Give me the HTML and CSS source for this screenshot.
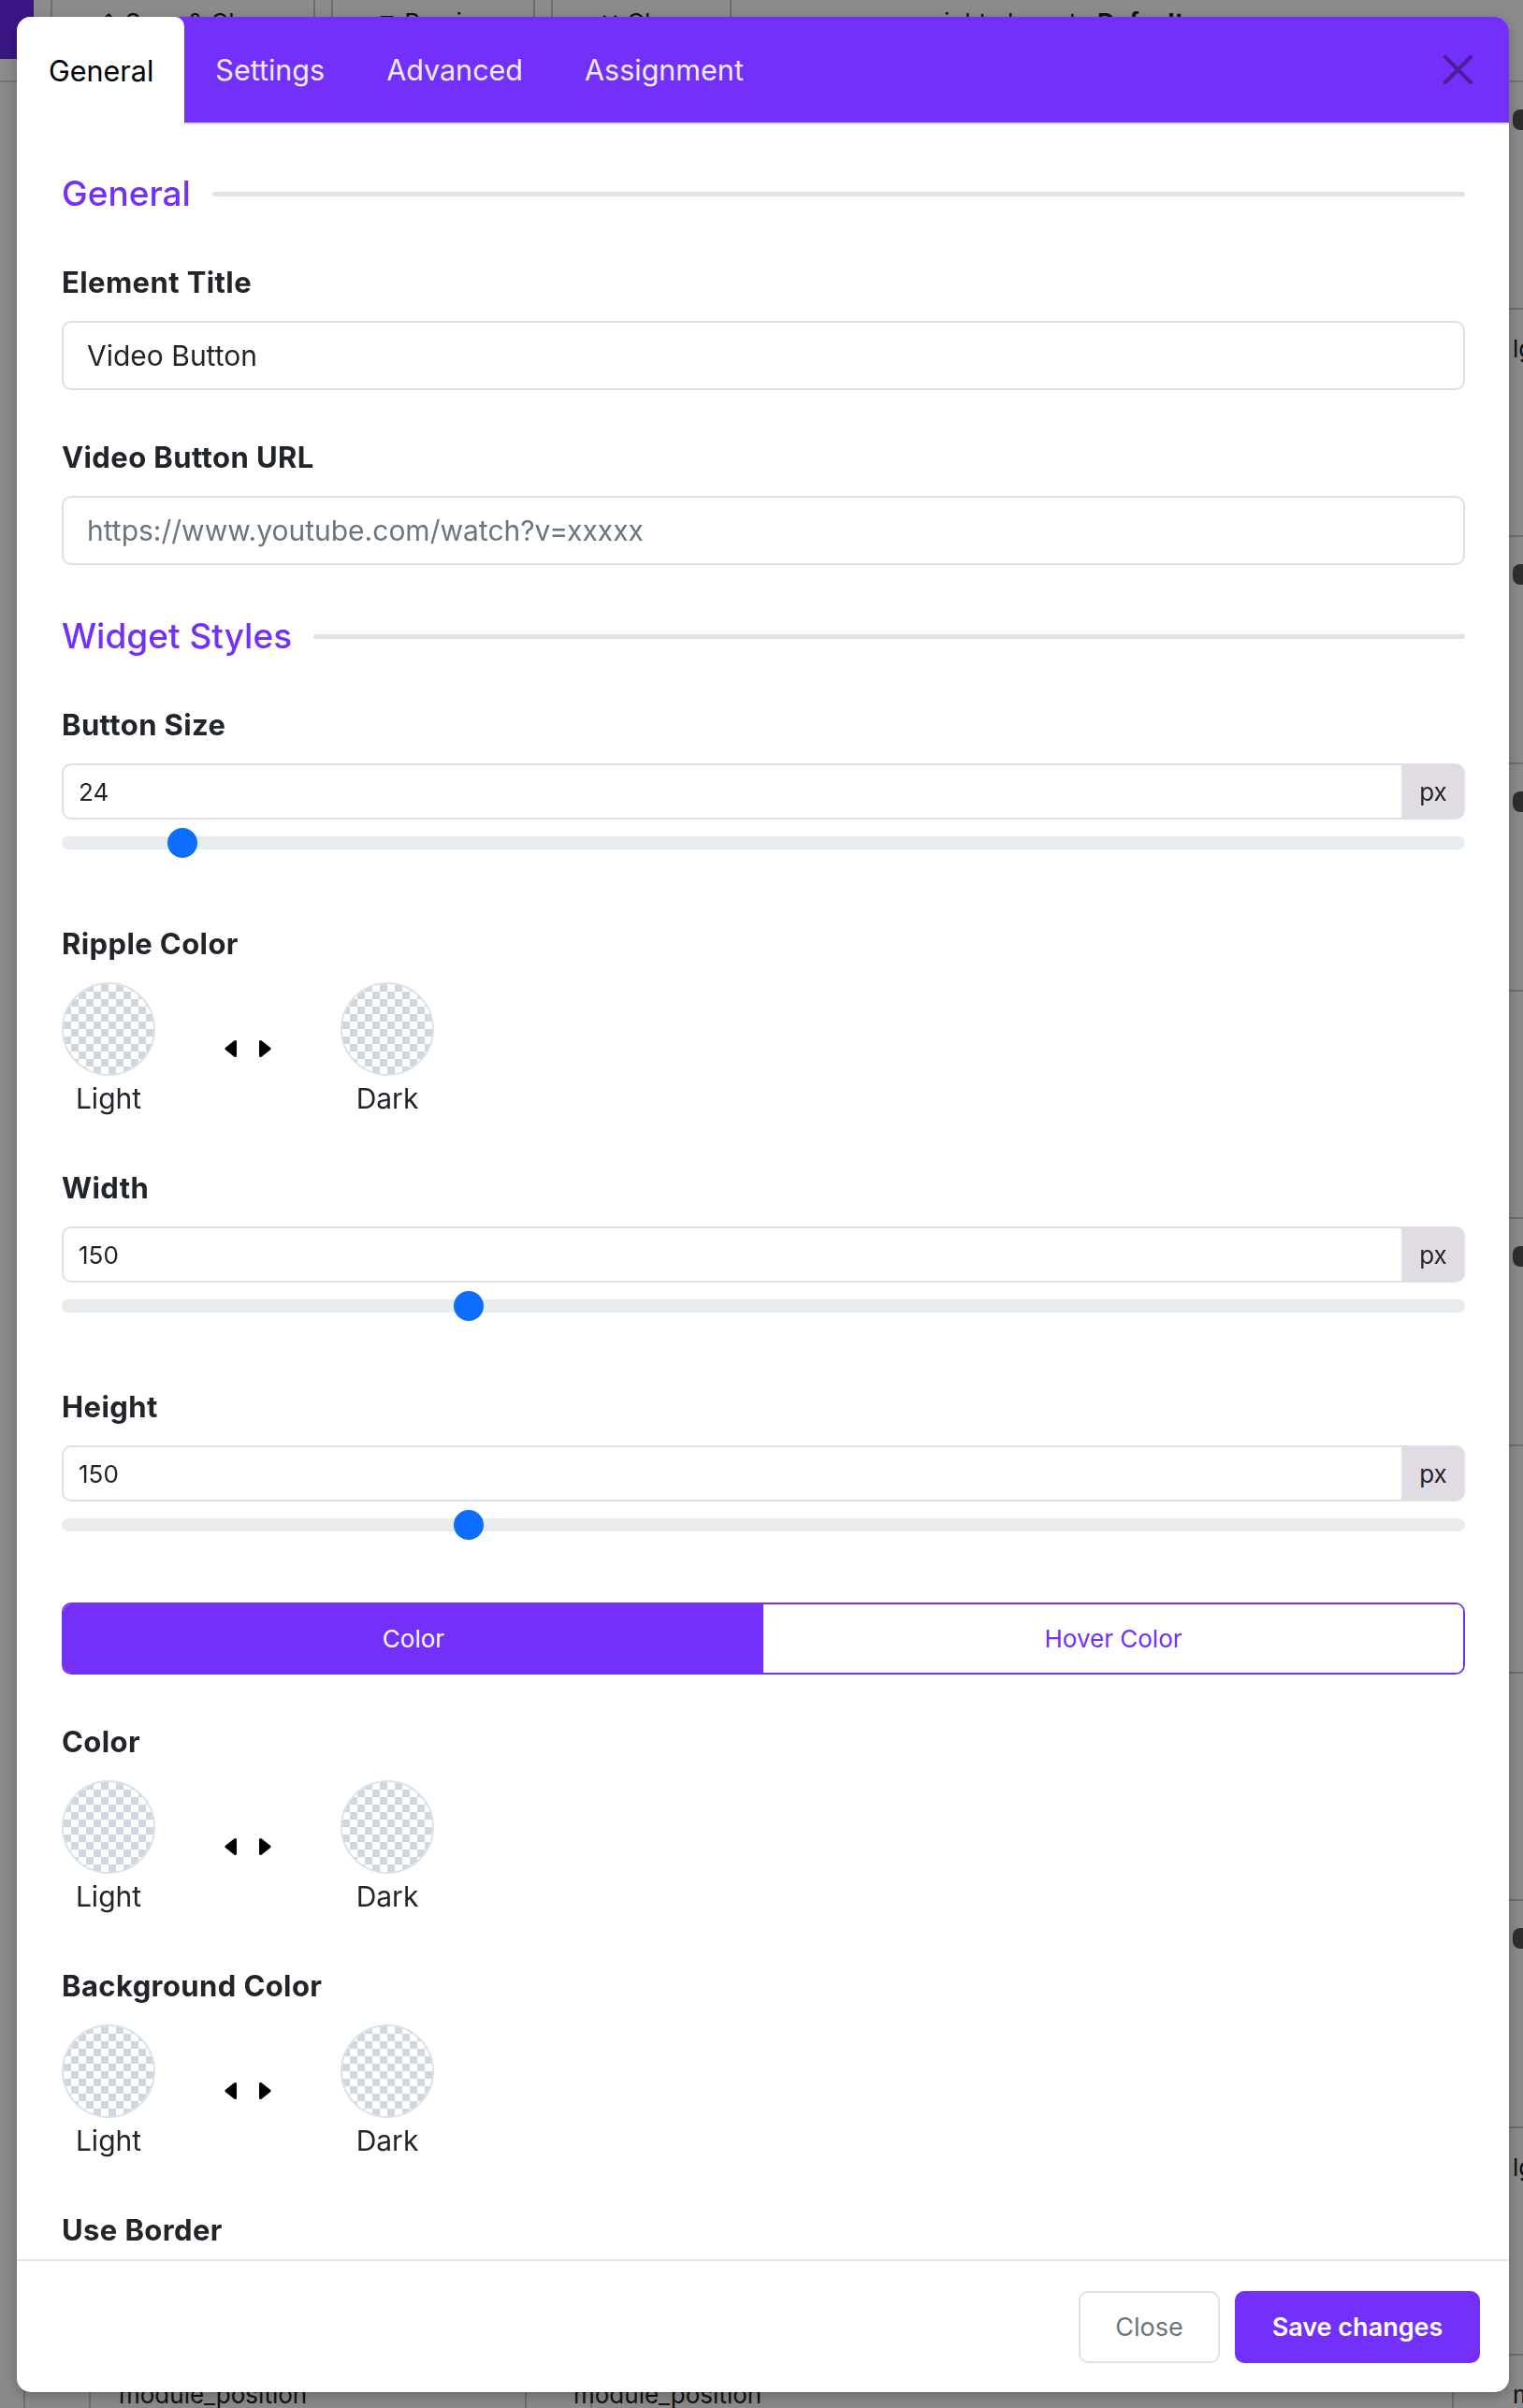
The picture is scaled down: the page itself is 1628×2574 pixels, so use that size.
FILE: index.html
```html
<!DOCTYPE html>
<html lang="en">
<head>
  <meta charset="UTF-8" />
  <title>Video Button - Element Settings</title>
  <link rel="stylesheet" href="styles.css">
</head>
<body>

  <!-- page behind the dialog -->
  <div class="page">
    <div class="topbar">
      <div class="brand"></div>
      <div class="tool">&#8963; Save &amp; Close</div>
      <div class="tool">&#10697; Preview</div>
      <div class="tool">&#10005; Close</div>
      <div class="topbar-text">right &nbsp; layout &nbsp; <b>Default</b></div>
    </div>
    <div class="bg-table">
      <div class="bg-row"><span></span><span>title</span><span></span><span>module_title</span><span><i class="lock"></i></span></div>
      <div class="bg-row"><span></span><span>align</span><span></span><span>module_align</span><span>lg</span></div>
      <div class="bg-row"><span></span><span>position</span><span></span><span>module_position</span><span><i class="lock"></i></span></div>
      <div class="bg-row"><span></span><span>style</span><span></span><span>module_style</span><span><i class="lock"></i></span></div>
      <div class="bg-row"><span></span><span>layout</span><span></span><span>module_layout</span><span></span></div>
      <div class="bg-row"><span></span><span>width</span><span></span><span>module_width</span><span><i class="lock"></i></span></div>
      <div class="bg-row"><span></span><span>height</span><span></span><span>module_height</span><span></span></div>
      <div class="bg-row"><span></span><span>color</span><span></span><span>module_color</span><span></span></div>
      <div class="bg-row"><span></span><span>border</span><span></span><span>module_border</span><span><i class="lock"></i></span></div>
      <div class="bg-row"><span></span><span>class</span><span></span><span>module_class</span><span>lg</span></div>
      <div class="bg-row"><span></span><span>module_position</span><span></span><span>module_position</span><span>mo</span></div>
    </div>
  </div>
  <div class="backdrop"></div>

  <!-- element settings dialog -->
  <div class="modal">
    <header class="modal-header">
      <nav class="tabs">
        <a class="tab active">General</a>
        <a class="tab">Settings</a>
        <a class="tab">Advanced</a>
        <a class="tab">Assignment</a>
      </nav>
      <button class="btn-close" title="Close">
        <svg width="31" height="31" viewBox="0 0 31 31"><path d="M2 2 29 29M29 2 2 29" stroke="currentColor" stroke-width="4" stroke-linecap="round"/></svg>
      </button>
    </header>

    <div class="modal-body">
      <div class="section-title"><h2>General</h2></div>

      <div class="field">
        <label class="field-label">Element Title</label>
        <input class="form-control" type="text" value="Video Button">
      </div>

      <div class="field">
        <label class="field-label">Video Button URL</label>
        <input class="form-control" type="text" placeholder="https://www.youtube.com/watch?v=xxxxx">
      </div>

      <div class="section-title"><h2>Widget Styles</h2></div>

      <div class="field field-range">
        <label class="field-label">Button Size</label>
        <div class="input-group">
          <input class="form-control" type="text" value="24">
          <span class="addon">px</span>
        </div>
        <input class="range" type="range" min="1" max="300" value="24">
      </div>

      <div class="field field-swatch">
        <label class="field-label">Ripple Color</label>
        <div class="swatches">
          <div class="swatch"><span class="swatch-dot"></span><span class="swatch-name">Light</span></div>
          <svg class="swap" width="50" height="20" viewBox="0 0 50 20"><path d="M2 10 11.5 2.5V17.5Z M48 10 38.5 2.5V17.5Z" fill="#000" stroke="#000" stroke-width="3" stroke-linejoin="round"/></svg>
          <div class="swatch"><span class="swatch-dot"></span><span class="swatch-name">Dark</span></div>
        </div>
      </div>

      <div class="field field-range">
        <label class="field-label">Width</label>
        <div class="input-group">
          <input class="form-control" type="text" value="150">
          <span class="addon">px</span>
        </div>
        <input class="range" type="range" min="0" max="525" value="150">
      </div>

      <div class="field field-range last-range">
        <label class="field-label">Height</label>
        <div class="input-group">
          <input class="form-control" type="text" value="150">
          <span class="addon">px</span>
        </div>
        <input class="range" type="range" min="0" max="525" value="150">
      </div>

      <div class="segmented">
        <button class="seg active">Color</button>
        <button class="seg">Hover Color</button>
      </div>

      <div class="field field-swatch">
        <label class="field-label">Color</label>
        <div class="swatches">
          <div class="swatch"><span class="swatch-dot"></span><span class="swatch-name">Light</span></div>
          <svg class="swap" width="50" height="20" viewBox="0 0 50 20"><path d="M2 10 11.5 2.5V17.5Z M48 10 38.5 2.5V17.5Z" fill="#000" stroke="#000" stroke-width="3" stroke-linejoin="round"/></svg>
          <div class="swatch"><span class="swatch-dot"></span><span class="swatch-name">Dark</span></div>
        </div>
      </div>

      <div class="field field-swatch">
        <label class="field-label">Background Color</label>
        <div class="swatches">
          <div class="swatch"><span class="swatch-dot"></span><span class="swatch-name">Light</span></div>
          <svg class="swap" width="50" height="20" viewBox="0 0 50 20"><path d="M2 10 11.5 2.5V17.5Z M48 10 38.5 2.5V17.5Z" fill="#000" stroke="#000" stroke-width="3" stroke-linejoin="round"/></svg>
          <div class="swatch"><span class="swatch-dot"></span><span class="swatch-name">Dark</span></div>
        </div>
      </div>

      <div class="field">
        <label class="field-label">Use Border</label>
        <label class="toggle"><input type="checkbox"><span></span></label>
      </div>
    </div>

    <footer class="modal-footer">
      <button class="btn btn-outline">Close</button>
      <button class="btn btn-primary">Save changes</button>
    </footer>
  </div>

</body>
</html>
```

FILE: styles.css
```css
/* --- COLORS --- */
:root {
  --primary: #7230fa;
  --text: #212529;
  --muted: #6c757d;
  --border: #dfe0e5;
  --track: #e9ecef;
  --thumb: #0d6efd;
}

* { box-sizing: border-box; }

html, body { margin: 0; }
body {
  font-family: Inter, "Noto Sans", "Liberation Sans", sans-serif;
  color: var(--text);
  background: #fbfbfc;
  width: 1628px;
  height: 2574px;
  overflow: hidden;
  position: relative;
}

/* --- PAGE BEHIND --- */
.page { height: 2574px; overflow: hidden; }
.topbar {
  display: flex;
  align-items: flex-start;
  height: 88px;
  border-bottom: 2px solid #d3d3d6;
  background: #fff;
}
.brand { width: 36px; height: 63px; background: #6b2af2; margin-right: 18px; }
.tool {
  padding: 8px 40px 0 50px;
  height: 100%;
  font-size: 26px;
  color: #222;
  border-left: 2px solid #c9c9cc;
  border-right: 2px solid #c9c9cc;
  margin-right: 17px;
}
.topbar-text { padding: 8px 0 0 200px; font-size: 26px; color: #222; }

.bg-table { margin-left: 25px; border-left: 2px solid #c9c9cc; }
.bg-row {
  display: grid;
  grid-template-columns: 66px 470px 16px 975px 1fr;
  height: 243px;
  border-bottom: 2px solid #c9c9cc;
  font-size: 26px;
  color: #222;
}
.bg-row span { padding: 26px 34px; border-right: 2px solid #c9c9cc; white-space: nowrap; overflow: hidden; }
.bg-row span:last-child { border-right: 0; padding-left: 63px; }
.bg-row:last-child { height: 80px; }
.lock { display: inline-block; width: 32px; height: 22px; border-radius: 8px; background: #555; }

.backdrop { position: fixed; inset: 0; background: rgba(0, 0, 0, 0.45); }

/* --- DIALOG --- */
.modal {
  position: absolute;
  top: 18px;
  left: 18px;
  width: 1595px;
  height: 2539px;
  background: #fff;
  border-radius: 15px;
  overflow: hidden;
  display: flex;
  flex-direction: column;
  box-shadow: 0 4px 14px rgba(0, 0, 0, 0.25);
}

.modal-header {
  display: flex;
  align-items: stretch;
  height: 115px;
  flex-shrink: 0;
  background: var(--primary);
  border-bottom: 2px solid #e3ddf3;
}
.tabs { display: flex; }
.tab {
  display: flex;
  align-items: center;
  padding: 0 33px;
  font-size: 30.5px;
  color: #f1e9ff;
  cursor: pointer;
}
.tab.active {
  background: #fff;
  color: #000;
  padding-left: 34px;
  margin-bottom: -2px;
  border-top-right-radius: 10px;
}
.btn-close {
  margin-left: auto;
  margin-right: 39px;
  padding: 0;
  border: 0;
  background: none;
  color: #4b1e9e;
  display: flex;
  align-items: center;
  cursor: pointer;
}

.modal-body {
  flex: 1;
  overflow: hidden;
  padding: 52px 47px 0 48px;
}

.section-title {
  display: flex;
  align-items: center;
  gap: 23px;
  margin-bottom: 55px;
}
.section-title h2 {
  margin: 0;
  font-size: 37px;
  font-weight: 500;
  line-height: 44px;
  color: var(--primary);
}
.section-title::after {
  content: "";
  flex: 1;
  height: 5px;
  border-radius: 3px;
  background: #dee2e6;
}

.field { margin-bottom: 54px; }
.field-range { margin-bottom: 74px; }
.field-range.last-range { margin-bottom: 67px; }
.field-swatch { margin-bottom: 60px; }
.field-label {
  display: block;
  font-size: 31px;
  font-weight: 700;
  letter-spacing: 0.4px;
  line-height: 35px;
  margin-bottom: 24px;
}

.form-control {
  display: block;
  width: 100%;
  height: 74px;
  padding: 0 25px;
  border: 2px solid var(--border);
  border-radius: 10px;
  font-family: inherit;
  font-size: 30px;
  color: var(--text);
  background: #fff;
  outline: none;
}
.form-control::placeholder { color: var(--muted); }

.input-group { display: flex; height: 60px; }
.input-group .form-control {
  height: 60px;
  padding: 0 16px;
  font-size: 26px;
  border-radius: 10px 0 0 10px;
}
.addon {
  width: 66px;
  flex-shrink: 0;
  display: flex;
  align-items: center;
  justify-content: center;
  font-size: 26px;
  background: #e1dbe3;
  border: 2px solid var(--border);
  border-left: 0;
  border-radius: 0 10px 10px 0;
}

/* --- SLIDER --- */
.range {
  -webkit-appearance: none;
  appearance: none;
  display: block;
  width: 100%;
  height: 32px;
  margin: 9px 0 0;
  background: transparent;
}
.range::-webkit-slider-runnable-track {
  height: 14px;
  border-radius: 7px;
  background: var(--track);
}
.range::-webkit-slider-thumb {
  -webkit-appearance: none;
  width: 32px;
  height: 32px;
  margin-top: -9px;
  border: 0;
  border-radius: 50%;
  background: var(--thumb);
}

/* --- COLOR PICKERS --- */
.swatches { display: flex; align-items: center; gap: 74px; }
.swatch { width: 100px; display: flex; flex-direction: column; align-items: center; gap: 6px; }
.swatch-dot {
  width: 100px;
  height: 100px;
  border-radius: 50%;
  border: 2px solid #dde2e7;
  background: repeating-conic-gradient(#cfd8e1 0 25%, #fff 0 50%) 0 0 / 16px 16px;
}
.swatch-name { font-size: 30px; line-height: 36px; }

/* --- COLOR / HOVER SWITCH --- */
.segmented {
  display: flex;
  height: 77px;
  border: 2px solid var(--primary);
  border-radius: 10px;
  overflow: hidden;
  margin-bottom: 54px;
}
.seg {
  flex: 1;
  border: 0;
  background: #fff;
  color: var(--primary);
  font-family: inherit;
  font-size: 26px;
  cursor: pointer;
}
.seg.active { background: var(--primary); color: #fff; }

.toggle { display: inline-block; width: 80px; height: 40px; }
.toggle input { display: none; }
.toggle span { display: block; height: 100%; border-radius: 20px; border: 2px solid var(--border); }

/* --- FOOTER --- */
.modal-footer {
  flex-shrink: 0;
  display: flex;
  justify-content: flex-end;
  gap: 16px;
  padding: 32px 31px 31px;
  border-top: 2px solid #e3e4e7;
}
.btn {
  height: 77px;
  border-radius: 10px;
  font-family: inherit;
  font-size: 27px;
  cursor: pointer;
}
.btn-outline { width: 151px; background: #fff; color: var(--muted); border: 2px solid #dee2e6; }
.btn-primary { width: 262px; background: var(--primary); color: #fff; border: 0; font-weight: 600; }
```
